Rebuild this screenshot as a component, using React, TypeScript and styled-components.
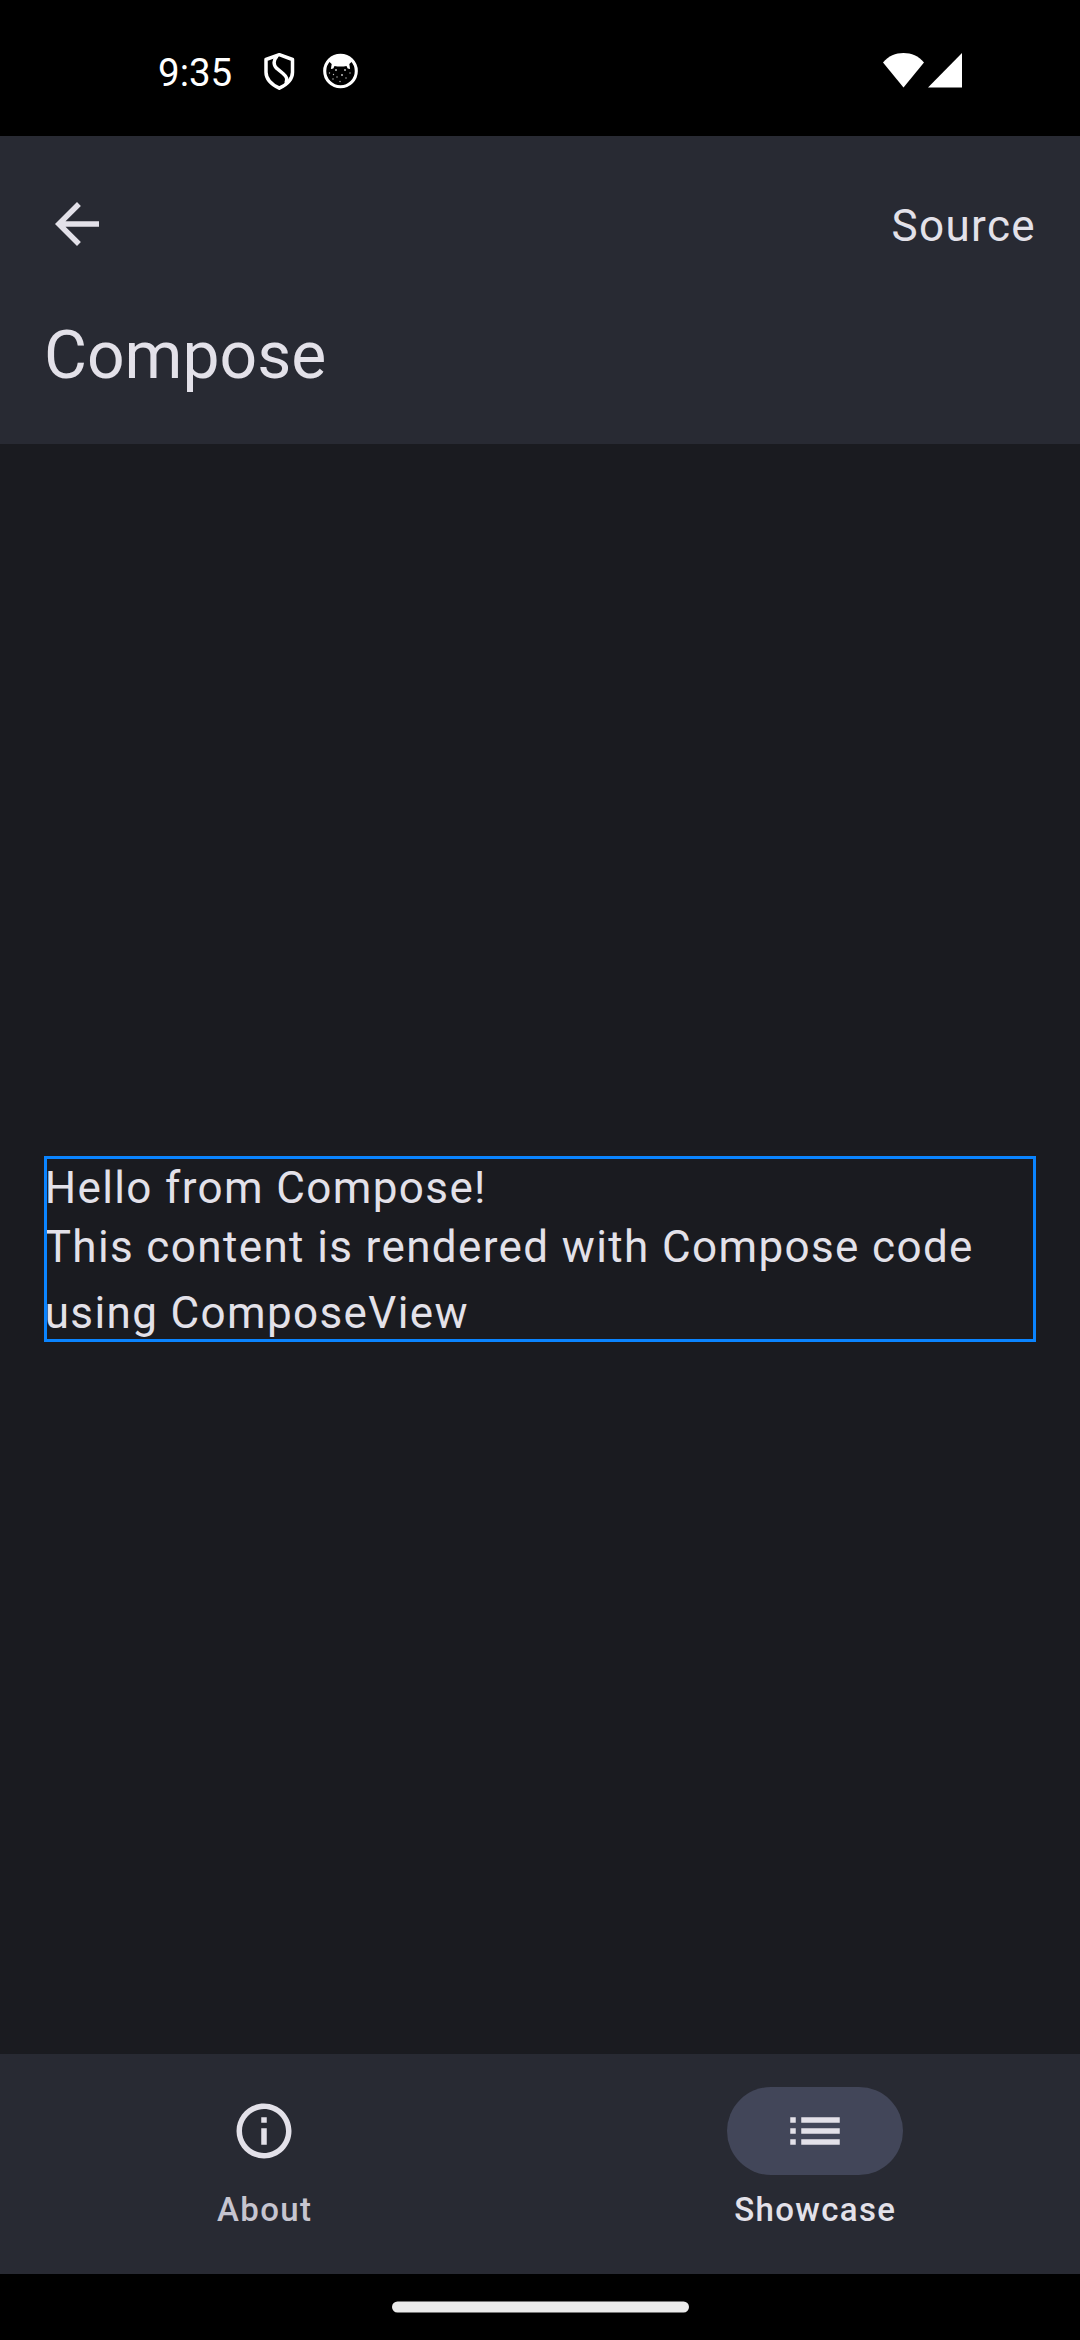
import React from 'react';
import styled, { createGlobalStyle } from 'styled-components';

const GlobalStyle = createGlobalStyle`
  *, *::before, *::after { box-sizing: border-box; }
  body { margin: 0; background: #000; }
`;

const Screen = styled.div`
  display: flex;
  flex-direction: column;
  width: 1080px;
  height: 2340px;
  background: #000;
  color: #e3e1e9;
  font-family: Roboto, 'Liberation Sans', sans-serif;
  overflow: hidden;
`;

const StatusBar = styled.header`
  display: flex;
  justify-content: space-between;
  height: 136px;
  padding: 50px 118px 0 158px;
  color: #fff;
`;

const StatusGroup = styled.div<{ $gap: number }>`
  display: flex;
  align-items: flex-start;
  gap: ${({ $gap }) => $gap}px;
`;

const Clock = styled.time`
  width: 77px;
  font-size: 38.5px;
  line-height: 45px;
  white-space: nowrap;
`;

const Icon = styled.svg`
  display: block;
  flex: none;
`;

const StatusIcon = styled(Icon)<{ $top?: number }>`
  margin-top: ${({ $top = 2 }) => $top}px;
`;

const TopBar = styled.section`
  display: flex;
  flex-direction: column;
  height: 308px;
  padding: 55px 44px 0;
  background: #282a33;
`;

const Actions = styled.div`
  display: flex;
  justify-content: space-between;
  align-items: center;
  height: 66px;
`;

const PlainButton = styled.button`
  display: flex;
  padding: 0;
  border: 0;
  background: none;
  color: inherit;
  font: inherit;
`;

const SourceButton = styled(PlainButton)`
  font-size: 44px;
  line-height: 52px;
  letter-spacing: 1.375px;
  padding-top: 4px;
`;

const Title = styled.h1`
  margin: 60px 0 0;
  font-size: 66px;
  font-weight: 400;
  line-height: 78px;
`;

const Content = styled.main`
  flex: 1;
  display: flex;
  flex-direction: column;
  justify-content: center;
  padding: 0 44px;
  background: #1a1b20;
`;

const ComposeFrame = styled.div`
  height: 186px;
  padding: 6px 0 0 0.7px;
  outline: 3px solid #0a84ff;
  outline-offset: -3px;
`;

const Line = styled.p<{ $height: number }>`
  margin: 0;
  font-size: 44px;
  line-height: ${({ $height }) => $height}px;
  letter-spacing: 1.375px;
`;

const NavBar = styled.nav`
  display: grid;
  grid-template-columns: 1fr 1fr;
  gap: 22px;
  height: 220px;
  padding: 33px 1px 0 0;
  background: #282a33;
`;

const NavItem = styled(PlainButton)<{ $active?: boolean }>`
  flex-direction: column;
  align-items: center;
  color: ${({ $active }) => ($active ? '#e3e1e9' : '#c6c5d0')};
`;

const Indicator = styled.span<{ $active?: boolean }>`
  display: flex;
  align-items: center;
  justify-content: center;
  width: 176px;
  height: 88px;
  border-radius: 44px;
  color: #e3e1e9;
  background: ${({ $active }) => ($active ? '#424659' : 'transparent')};
`;

const NavLabel = styled.span`
  margin-top: 15px;
  padding-left: 1px;
  font-size: 33px;
  font-weight: 500;
  line-height: 39px;
  letter-spacing: 1.375px;
`;

const GestureArea = styled.footer`
  display: flex;
  justify-content: center;
  height: 66px;
  padding-top: 27px;
`;

const GestureHandle = styled.div`
  width: 297px;
  height: 11px;
  border-radius: 5.5px;
  background: #ebebeb;
  transform: translateY(0.5px);
`;

const ShieldIcon = () => (
  <StatusIcon width="32" height="39" viewBox="0 0 32 39" fill="none" stroke="#fff" strokeWidth="3.5" strokeLinejoin="round">
    <path d="M16.300 2.700 29.500 7.500v12.700c0 6.500-4.500 11.800-13.200 16C7.600 32 3 26.700 3 20.200V7.500z" />
    <path d="M14 4C10.300 8 10.200 13 13.500 16.200L20 21.500C24 25 24.500 27 23 31" />
  </StatusIcon>
);

const CatIcon = () => (
  <StatusIcon $top={3} width="35" height="36" viewBox="0 0 35 36" fill="#fff">
    <circle cx="17.500" cy="18" r="15.800" fill="none" stroke="#fff" strokeWidth="3.100" />
    <path d="M6 8.500C9 4 13 2 17.500 2S26 4 29 8.500L26.300 11l.8 5-2.400-.5-1.200-2.600c-3.500.8-8.500.8-12 0L10.300 15.500 7.900 16l.8-5z" />
    <g opacity=".75">
      <circle cx="13" cy="17" r="1" /><circle cx="22" cy="17" r="1" />
      <circle cx="6.500" cy="20" r=".7" /><circle cx="10.500" cy="21.500" r=".7" />
      <circle cx="19" cy="22" r="1" /><circle cx="27" cy="20" r=".7" />
      <circle cx="14" cy="24" r=".7" /><circle cx="23" cy="25" r=".7" />
      <circle cx="17" cy="28.500" r=".7" /><circle cx="10" cy="26" r=".7" />
    </g>
  </StatusIcon>
);

const materialPaths = {
  back: 'M20 11H7.830l5.590-5.590L12 4l-8 8 8 8 1.410-1.410L7.830 13H20v-2z',
  info: 'M11 7h2v2h-2zm0 4h2v6h-2zm1-9C6.480 2 2 6.480 2 12s4.480 10 10 10 10-4.480 10-10S17.520 2 12 2zm0 18c-4.410 0-8-3.590-8-8s3.590-8 8-8 8 3.590 8 8-3.590 8-8 8z',
  list: 'M3 13h2v-2H3v2zm0 4h2v-2H3v2zm0-8h2V7H3v2zm4 4h14v-2H7v2zm0 4h14v-2H7v2zM7 7v2h14V7H7z',
};

const MaterialIcon = ({ name }: { name: keyof typeof materialPaths }) => (
  <Icon width="66" height="66" viewBox="0 0 24 24" fill="currentColor">
    <path d={materialPaths[name]} />
  </Icon>
);

export default function App() {
  return (
    <>
      <GlobalStyle />
      <Screen>
        <StatusBar>
          <StatusGroup $gap={28}>
            <Clock>9:35</Clock>
            <ShieldIcon />
            <CatIcon />
          </StatusGroup>
          <StatusGroup $gap={4}>
            <StatusIcon width="41" height="36" viewBox="0 0 41 36" fill="#fff">
              <path d="M0 10.500C5.500 4 12.500 1.100 20.500 1.100S35.500 4 41 10.500L20.500 35.500z" />
            </StatusIcon>
            <StatusIcon width="34" height="36" viewBox="0 0 34 36" fill="#fff">
              <path d="M34 1v34.500H0z" />
            </StatusIcon>
          </StatusGroup>
        </StatusBar>
        <TopBar>
          <Actions>
            <PlainButton aria-label="Back"><MaterialIcon name="back" /></PlainButton>
            <SourceButton>Source</SourceButton>
          </Actions>
          <Title>Compose</Title>
        </TopBar>
        <Content>
          <ComposeFrame>
            <Line $height={52}>Hello from Compose!</Line>
            <Line $height={66}>This content is rendered with Compose code using ComposeView</Line>
          </ComposeFrame>
        </Content>
        <NavBar>
          <NavItem>
            <Indicator><MaterialIcon name="info" /></Indicator>
            <NavLabel>About</NavLabel>
          </NavItem>
          <NavItem $active>
            <Indicator $active><MaterialIcon name="list" /></Indicator>
            <NavLabel>Showcase</NavLabel>
          </NavItem>
        </NavBar>
        <GestureArea><GestureHandle /></GestureArea>
      </Screen>
    </>
  );
}
